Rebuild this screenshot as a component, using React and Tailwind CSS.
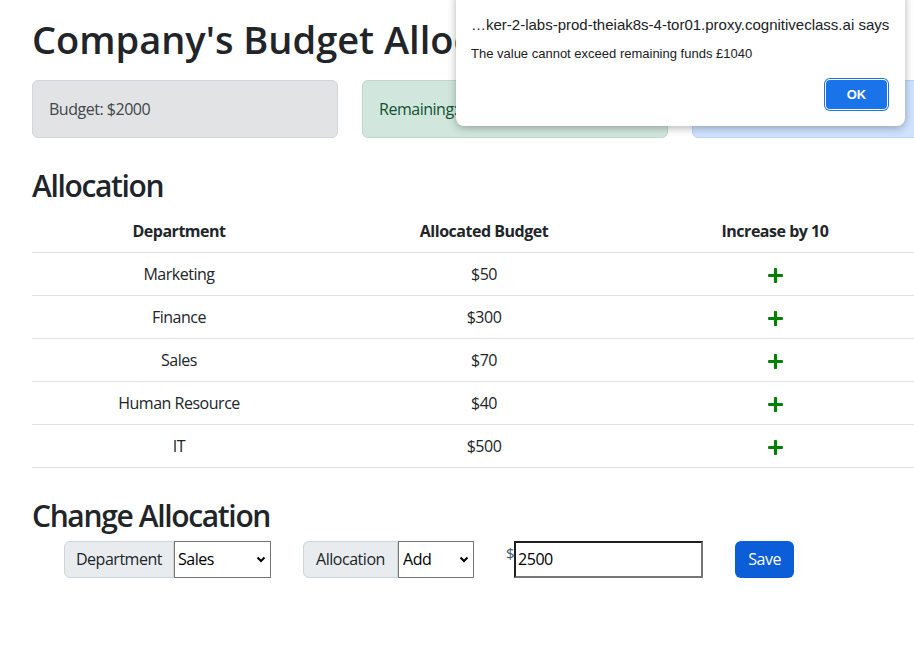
import React from "react";
import { FaPlus } from "react-icons/fa";

const rows = [
  ["Marketing", "$50"],
  ["Finance", "$300"],
  ["Sales", "$70"],
  ["Human Resource", "$40"],
  ["IT", "$500"],
];

export default function App() {
  return (
    <div className="relative w-[914px] h-[654px] overflow-hidden bg-white text-[#212529] tracking-[-0.03em] font-['Open_Sans','Noto_Sans',sans-serif]">
      <div className="pl-[32px] pt-[15px]">
        <h1 className="text-[38px] leading-[48px] font-semibold whitespace-nowrap tracking-normal">Company's Budget Allocation</h1>
        <div className="flex gap-6 mt-[17px] w-[1000px]">
          <div className="w-[306px] h-[58px] shrink-0 rounded-md border border-[#d3d6d8] bg-[#e2e3e5] text-[#41464b] px-4 flex items-center text-[16px]">
            Budget: $2000
          </div>
          <div className="w-[306px] h-[58px] shrink-0 rounded-md border border-[#badbcc] bg-[#d1e7dd] text-[#0f5132] px-4 flex items-center text-[16px]">
            Remaining: $1040
          </div>
          <div className="w-[306px] h-[58px] shrink-0 rounded-md border border-[#b6d4fe] bg-[#cfe2ff] text-[#084298] px-4 flex items-center text-[16px]">
            Spent so far: $960
          </div>
        </div>
        <h2 className="mt-[30px] text-[30px] leading-[36px] font-semibold tracking-[-0.045em]">Allocation</h2>
        <table className="mt-[7px] w-[882px] table-fixed border-collapse text-[16px]">
          <colgroup>
            <col className="w-[294px]" />
            <col className="w-[316px]" />
            <col className="w-[272px]" />
          </colgroup>
          <thead>
            <tr className="h-[41px] border-b border-[#dee2e6]">
              <th className="font-bold text-center">Department</th>
              <th className="font-bold text-center">Allocated Budget</th>
              <th className="font-bold text-center pr-[6px]">Increase by 10</th>
            </tr>
          </thead>
          <tbody>
            {rows.map(([d, v]) => (
              <tr key={d} className="h-[43px] border-b border-[#dee2e6]">
                <td className="text-center">{d}</td>
                <td className="text-center">{v}</td>
                <td className="text-center pr-[6px]">
                  <span className="inline-flex items-center justify-center align-middle">
                    <FaPlus className="text-[#008000] w-[17px] h-[17px]" />
                  </span>
                </td>
              </tr>
            ))}
          </tbody>
        </table>
        <h2 className="mt-[30px] text-[30px] leading-[36px] font-semibold tracking-[-0.045em]">Change Allocation</h2>
        <div className="flex items-start mt-[7px] ml-[32px] text-[16px]">
          <div className="flex h-[37px]">
            <div className="w-[110px] flex items-center justify-center rounded-l-md border border-[#ced4da] bg-[#e9ecef] text-[#212529]">
              Department
            </div>
            <div className="w-[97px] flex items-center justify-between border border-[#767676] bg-white pl-[3px] pr-[4px] text-black">
              <span>Sales</span>
              <Chevron />
            </div>
          </div>
          <div className="flex h-[37px] ml-[32px]">
            <div className="w-[95px] flex items-center justify-center rounded-l-md border border-[#ced4da] bg-[#e9ecef] text-[#212529]">
              Allocation
            </div>
            <div className="w-[76px] flex items-center justify-between border border-[#767676] bg-white pl-[4px] pr-[4px] text-black">
              <span>Add</span>
              <Chevron />
            </div>
          </div>
          <span className="ml-[32px] mt-[2px] text-[15px] leading-[20px] text-[#41556b]">$</span>
          <div className="w-[189px] h-[37px] border-2 border-t-[#1f1f1f] border-l-[#1f1f1f] border-b-[#767676] border-r-[#767676] flex items-center pl-[2px] text-black">
            2500
          </div>
          <button className="ml-[32px] w-[59px] h-[37px] rounded-md bg-[#0b5ed7] text-white">Save</button>
        </div>
      </div>

      <div className="absolute left-[456px] top-[-10px] w-[449px] h-[136px] bg-white rounded-lg shadow-[0_2px_8px_rgba(0,0,0,0.3)] tracking-normal font-['Liberation_Sans',sans-serif]">
        <div className="absolute left-[15px] top-[24px] text-[15px] text-[#202124] whitespace-nowrap">
          …ker-2-labs-prod-theiak8s-4-tor01.proxy.cognitiveclass.ai says
        </div>
        <div className="absolute left-[15px] top-[54px] text-[13px] text-[#202124] whitespace-nowrap">
          The value cannot exceed remaining funds £1040
        </div>
        <button className="absolute left-[370px] top-[90px] w-[61px] h-[29px] rounded-[4px] bg-[#1a73e8] text-white text-[13px] font-bold shadow-[0_0_0_1px_white,0_0_0_2px_#1a73e8]">
          OK
        </button>
      </div>
    </div>
  );
}

function Chevron() {
  return (
    <svg width="10" height="7" viewBox="0 0 10 7" className="shrink-0">
      <path d="M1.5 1.5 L5 5 L8.5 1.5" fill="none" stroke="black" strokeWidth="2" />
    </svg>
  );
}
